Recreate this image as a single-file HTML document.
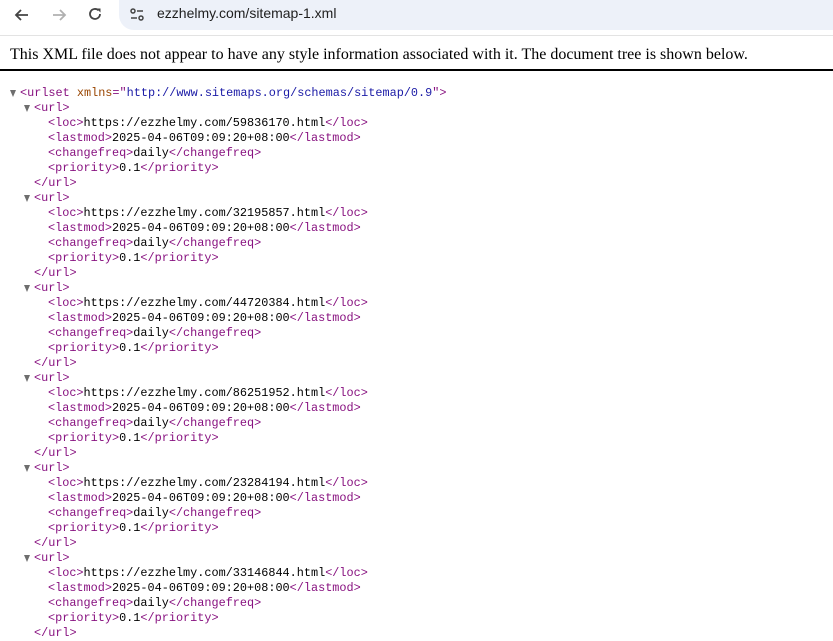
<!DOCTYPE html>
<html><head><style>
body{margin:0;width:833px;height:641px;overflow:hidden;background:#fff;position:relative}
.bar{position:absolute;left:0;top:0;width:833px;height:35px;background:#fff;border-bottom:1px solid #e3e3e3}
.pill{position:absolute;left:119px;top:0;width:720px;height:30px;background:#edf1f9;border-radius:0 0 0 15px}
.url{position:absolute;left:157px;top:5px;font:14px "Liberation Sans",sans-serif;color:#1f1f1f}
.msg{position:absolute;left:10px;top:46px;font:16px "Liberation Serif",serif;color:#000;white-space:nowrap}
.rule{position:absolute;left:0;top:69px;width:833px;height:2px;background:#000}
.tree{position:absolute;left:0;top:86px;font:11.85px "Liberation Mono",monospace;color:#000}
.tree div{height:15px;line-height:15px;position:relative;white-space:pre}
.l0{padding-left:20px}.l1{padding-left:34px}.l2{padding-left:48px}
.t{color:#881280}.a{color:#994500}.v{color:#1a1aa6}
.tri{position:absolute;top:4px;width:0;height:0;border-left:3.5px solid transparent;border-right:3.5px solid transparent;border-top:7px solid #6e6e6e}
.l0 .tri{left:10px}.l1 .tri{left:24px}
</style></head><body>
<div class="bar">
<svg style="position:absolute;left:13px;top:7px" width="18" height="16" viewBox="0 0 18 16"><path d="M15 8H3M8 3L3 8l5 5" stroke="#444" stroke-width="1.8" fill="none"/></svg>
<svg style="position:absolute;left:50px;top:7px" width="18" height="16" viewBox="0 0 18 16"><path d="M3 8h12M10 3l5 5-5 5" stroke="#b0b0b0" stroke-width="1.8" fill="none"/></svg>
<svg style="position:absolute;left:86px;top:5px" width="18" height="18" viewBox="0 0 18 18"><path d="M14 9a5 5 0 1 1-1.5-3.6" stroke="#444" stroke-width="1.8" fill="none"/><path d="M10.5 3.5h4v4z" fill="#444"/></svg>
<div class="pill"></div>
<svg style="position:absolute;left:129px;top:7px" width="16" height="16" viewBox="0 0 16 16"><circle cx="4" cy="4" r="2" stroke="#444" stroke-width="1.5" fill="none"/><path d="M8 4h6M2 11h6" stroke="#444" stroke-width="1.5"/><circle cx="12" cy="11" r="2" stroke="#444" stroke-width="1.5" fill="none"/></svg>
<div class="url">ezzhelmy.com/sitemap-1.xml</div>
</div>
<div class="msg">This XML file does not appear to have any style information associated with it. The document tree is shown below.</div>
<div class="rule"></div>
<div class="tree"><div class="l0"><i class="tri"></i><span class="t">&lt;urlset</span> <span class="a">xmlns</span><span class="t">="</span><span class="v">http://www.sitemaps.org/schemas/sitemap/0.9</span><span class="t">"&gt;</span></div><div class="l1"><i class="tri"></i><span class="t">&lt;url&gt;</span></div><div class="l2"><span class="t">&lt;loc&gt;</span>https://ezzhelmy.com/59836170.html<span class="t">&lt;/loc&gt;</span></div><div class="l2"><span class="t">&lt;lastmod&gt;</span>2025-04-06T09:09:20+08:00<span class="t">&lt;/lastmod&gt;</span></div><div class="l2"><span class="t">&lt;changefreq&gt;</span>daily<span class="t">&lt;/changefreq&gt;</span></div><div class="l2"><span class="t">&lt;priority&gt;</span>0.1<span class="t">&lt;/priority&gt;</span></div><div class="l1"><span class="t">&lt;/url&gt;</span></div><div class="l1"><i class="tri"></i><span class="t">&lt;url&gt;</span></div><div class="l2"><span class="t">&lt;loc&gt;</span>https://ezzhelmy.com/32195857.html<span class="t">&lt;/loc&gt;</span></div><div class="l2"><span class="t">&lt;lastmod&gt;</span>2025-04-06T09:09:20+08:00<span class="t">&lt;/lastmod&gt;</span></div><div class="l2"><span class="t">&lt;changefreq&gt;</span>daily<span class="t">&lt;/changefreq&gt;</span></div><div class="l2"><span class="t">&lt;priority&gt;</span>0.1<span class="t">&lt;/priority&gt;</span></div><div class="l1"><span class="t">&lt;/url&gt;</span></div><div class="l1"><i class="tri"></i><span class="t">&lt;url&gt;</span></div><div class="l2"><span class="t">&lt;loc&gt;</span>https://ezzhelmy.com/44720384.html<span class="t">&lt;/loc&gt;</span></div><div class="l2"><span class="t">&lt;lastmod&gt;</span>2025-04-06T09:09:20+08:00<span class="t">&lt;/lastmod&gt;</span></div><div class="l2"><span class="t">&lt;changefreq&gt;</span>daily<span class="t">&lt;/changefreq&gt;</span></div><div class="l2"><span class="t">&lt;priority&gt;</span>0.1<span class="t">&lt;/priority&gt;</span></div><div class="l1"><span class="t">&lt;/url&gt;</span></div><div class="l1"><i class="tri"></i><span class="t">&lt;url&gt;</span></div><div class="l2"><span class="t">&lt;loc&gt;</span>https://ezzhelmy.com/86251952.html<span class="t">&lt;/loc&gt;</span></div><div class="l2"><span class="t">&lt;lastmod&gt;</span>2025-04-06T09:09:20+08:00<span class="t">&lt;/lastmod&gt;</span></div><div class="l2"><span class="t">&lt;changefreq&gt;</span>daily<span class="t">&lt;/changefreq&gt;</span></div><div class="l2"><span class="t">&lt;priority&gt;</span>0.1<span class="t">&lt;/priority&gt;</span></div><div class="l1"><span class="t">&lt;/url&gt;</span></div><div class="l1"><i class="tri"></i><span class="t">&lt;url&gt;</span></div><div class="l2"><span class="t">&lt;loc&gt;</span>https://ezzhelmy.com/23284194.html<span class="t">&lt;/loc&gt;</span></div><div class="l2"><span class="t">&lt;lastmod&gt;</span>2025-04-06T09:09:20+08:00<span class="t">&lt;/lastmod&gt;</span></div><div class="l2"><span class="t">&lt;changefreq&gt;</span>daily<span class="t">&lt;/changefreq&gt;</span></div><div class="l2"><span class="t">&lt;priority&gt;</span>0.1<span class="t">&lt;/priority&gt;</span></div><div class="l1"><span class="t">&lt;/url&gt;</span></div><div class="l1"><i class="tri"></i><span class="t">&lt;url&gt;</span></div><div class="l2"><span class="t">&lt;loc&gt;</span>https://ezzhelmy.com/33146844.html<span class="t">&lt;/loc&gt;</span></div><div class="l2"><span class="t">&lt;lastmod&gt;</span>2025-04-06T09:09:20+08:00<span class="t">&lt;/lastmod&gt;</span></div><div class="l2"><span class="t">&lt;changefreq&gt;</span>daily<span class="t">&lt;/changefreq&gt;</span></div><div class="l2"><span class="t">&lt;priority&gt;</span>0.1<span class="t">&lt;/priority&gt;</span></div><div class="l1"><span class="t">&lt;/url&gt;</span></div></div>
</body></html>
